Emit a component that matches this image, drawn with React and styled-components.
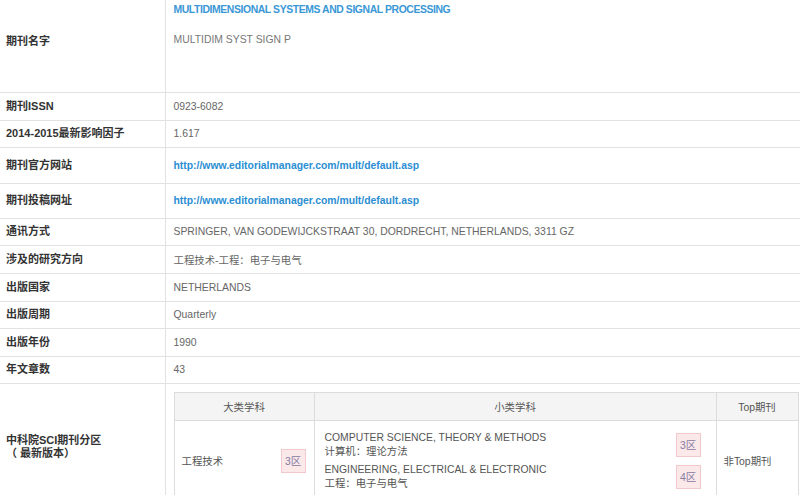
import React from "react";
import styled, { createGlobalStyle } from "styled-components";

const Global = createGlobalStyle`
  html, body { margin: 0; padding: 0; background: #fff; }
  body { font-family: "Liberation Sans", Arial, "Noto Sans CJK SC", sans-serif; font-size: 10.4px; color: #666; }
`;

const Table = styled.table`
  width: 800px;
  border-collapse: collapse;
  table-layout: fixed;
`;

const Row = styled.tr`
  height: ${(p) => p.$h}px;
  border-bottom: 1px solid #e2e2e2;
`;

const LabelCol = styled.col`
  width: 165px;
`;

const Label = styled.th`
  box-sizing: border-box;
  border-right: 1px solid #e2e2e2;
  text-align: left;
  padding: 0 0 ${(p) => p.$pb || 0}px 6px;
  font-weight: bold;
  color: #333;
  font-size: 11px;
  line-height: 13px;
  vertical-align: middle;
`;

const Value = styled.td`
  padding: 0 0 0 8px;
  color: #666;
  font-size: 10.4px;
  vertical-align: middle;
`;

const TitleCell = styled.td`
  padding: 3px 0 0 8px;
  vertical-align: top;
`;

const Title = styled.div`
  color: #3a97d6;
  font-weight: bold;
  font-size: 10.4px;
  letter-spacing: -0.4px;
  line-height: 14px;
`;

const Abbr = styled.div`
  color: #777;
  font-size: 10.4px;
  line-height: 14px;
  margin-top: 16px;
`;

const Link = styled.a`
  color: #2b8ed3;
  font-weight: bold;
  text-decoration: none;
`;

const SubCell = styled.td`
  padding: 8px 0 8px 8px;
`;

const Inner = styled.table`
  width: 624px;
  border-collapse: collapse;
  table-layout: fixed;
  border: 1px solid #dcdcdc;
`;

const Col = styled.col`
  width: ${(p) => p.$w}px;
`;

const Th = styled.th`
  box-sizing: border-box;
  height: 28px;
  padding: 0;
  background: #f4f4f4;
  border: 1px solid #dcdcdc;
  font-weight: normal;
  color: #555;
  font-size: 10.4px;
  text-align: center;
`;

const Td = styled.td`
  box-sizing: border-box;
  border: 1px solid #dcdcdc;
  padding: ${(p) => p.$pad || "0 8px"};
  color: #555;
  font-size: 10.4px;
  vertical-align: middle;
`;

const Flex = styled.div`
  display: flex;
  align-items: center;
  justify-content: space-between;
`;

const Sub = styled.div`
  display: flex;
  align-items: center;
  justify-content: space-between;
  height: 32px;
`;

const SubText = styled.div`
  line-height: 14px;
  color: #555;
`;

const Badge = styled.span`
  box-sizing: border-box;
  display: inline-flex;
  align-items: center;
  justify-content: center;
  width: 25px;
  height: 24px;
  background: #fbe9ea;
  border: 1px solid #f1c8cb;
  color: #8479a0;
  font-size: 10.4px;
`;

export default function App() {
  return (
    <>
      <Global />
      <Table>
        <colgroup>
          <LabelCol />
          <col />
        </colgroup>
        <tbody>
          <Row $h={92}>
            <Label $pb={8}>期刊名字</Label>
            <TitleCell>
              <Title>MULTIDIMENSIONAL SYSTEMS AND SIGNAL PROCESSING</Title>
              <Abbr>MULTIDIM SYST SIGN P</Abbr>
            </TitleCell>
          </Row>
          <Row $h={28}>
            <Label>期刊ISSN</Label>
            <Value>0923-6082</Value>
          </Row>
          <Row $h={27}>
            <Label>2014-2015最新影响因子</Label>
            <Value>1.617</Value>
          </Row>
          <Row $h={36}>
            <Label>期刊官方网站</Label>
            <Value><Link>http://www.editorialmanager.com/mult/default.asp</Link></Value>
          </Row>
          <Row $h={35}>
            <Label>期刊投稿网址</Label>
            <Value><Link>http://www.editorialmanager.com/mult/default.asp</Link></Value>
          </Row>
          <Row $h={27}>
            <Label>通讯方式</Label>
            <Value>SPRINGER, VAN GODEWIJCKSTRAAT 30, DORDRECHT, NETHERLANDS, 3311 GZ</Value>
          </Row>
          <Row $h={28}>
            <Label>涉及的研究方向</Label>
            <Value>工程技术-工程：电子与电气</Value>
          </Row>
          <Row $h={28}>
            <Label>出版国家</Label>
            <Value>NETHERLANDS</Value>
          </Row>
          <Row $h={27}>
            <Label>出版周期</Label>
            <Value>Quarterly</Value>
          </Row>
          <Row $h={28}>
            <Label>出版年份</Label>
            <Value>1990</Value>
          </Row>
          <Row $h={27}>
            <Label>年文章数</Label>
            <Value>43</Value>
          </Row>
          <Row>
            <Label>中科院SCI期刊分区<br />（ 最新版本）</Label>
            <SubCell>
              <Inner>
                <colgroup>
                  <Col $w={140} />
                  <Col $w={402} />
                  <Col $w={82} />
                </colgroup>
                <thead>
                  <tr>
                    <Th>大类学科</Th>
                    <Th>小类学科</Th>
                    <Th>Top期刊</Th>
                  </tr>
                </thead>
                <tbody>
                  <tr>
                    <Td $pad="0 8px 0 7px">
                      <Flex>
                        <span>工程技术</span>
                        <Badge>3区</Badge>
                      </Flex>
                    </Td>
                    <Td $pad="8px 15px 8px 10px">
                      <Sub>
                        <SubText>COMPUTER SCIENCE, THEORY &amp; METHODS<br />计算机：理论方法</SubText>
                        <Badge>3区</Badge>
                      </Sub>
                      <Sub>
                        <SubText>ENGINEERING, ELECTRICAL &amp; ELECTRONIC<br />工程：电子与电气</SubText>
                        <Badge>4区</Badge>
                      </Sub>
                    </Td>
                    <Td $pad="0 7px">非Top期刊</Td>
                  </tr>
                </tbody>
              </Inner>
            </SubCell>
          </Row>
        </tbody>
      </Table>
    </>
  );
}
